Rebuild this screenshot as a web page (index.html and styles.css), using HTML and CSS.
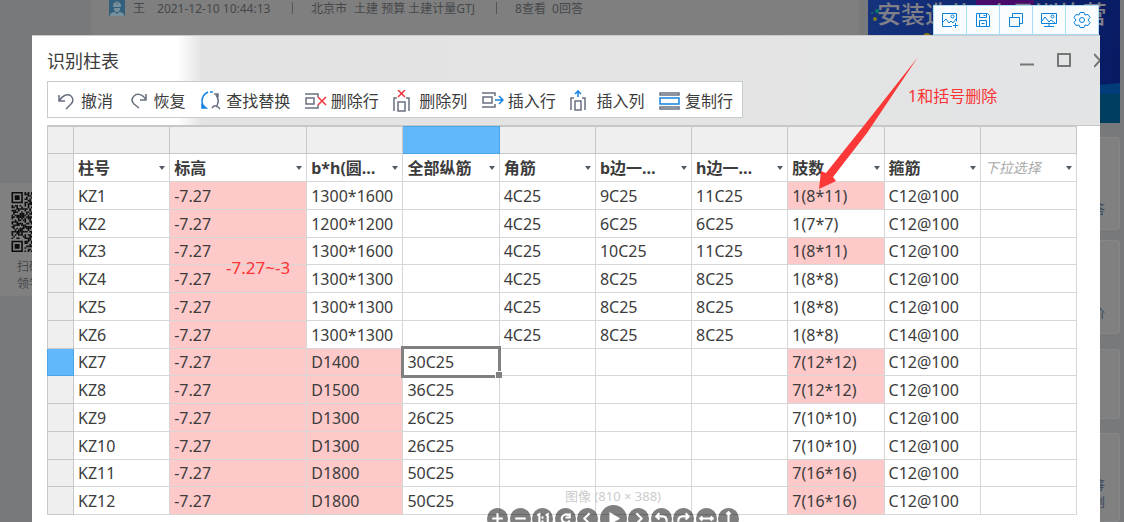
FILE: index.html
```html
<!DOCTYPE html>
<html lang="zh-CN">
<head>
<meta charset="utf-8">
<title>识别柱表</title>
<link rel="stylesheet" href="styles.css">
</head>
<body>
<div class="page">
  <aside class="rail">
    <div class="qr-card">
      <svg class="qr" viewBox="0 0 37 37" aria-hidden="true">
        <g class="qr-dots">
          <path d="M.5 8V29" stroke-dasharray="2 1 1 2 3 1"/>
          <path d="M1.5 9V29" stroke-dasharray="1 1 3 1 1 2"/>
          <path d="M2.5 8V29" stroke-dasharray="1 2 2 1"/>
          <path d="M3.5 8V29" stroke-dasharray="3 1 1 1 2 2"/>
          <path d="M4.5 10V29" stroke-dasharray="2 2 4 1"/>
          <path d="M5.5 8V28" stroke-dasharray="1 1 1 2 3 1"/>
          <path d="M6.5 9V29" stroke-dasharray="2 1 5 2"/>
          <path d="M7.5 10V28" stroke-dasharray="1 2 3 1"/>
          <path d="M8.5 0V37" stroke-dasharray="2 2 1 1 3 1"/>
          <path d="M9.5 1V37" stroke-dasharray="1 1 2 1 1 3"/>
          <path d="M10.5 0V37" stroke-dasharray="3 2 1 1"/>
          <path d="M11.5 2V37" stroke-dasharray="1 1 4 2 2 1"/>
          <path d="M12.5 0V37" stroke-dasharray="2 1 1 2"/>
          <path d="M13.5 0V37" stroke-dasharray="1 2 3 1"/>
          <path d="M.5 .5h6v6h-6zM.5 30.5h6v6h-6z"/>
        </g>
        <path d="M2 2h3v3H2zM2 32h3v3H2z"/>
      </svg>
      <p>扫码下载<br>领学习包</p>
    </div>
  </aside>
  <main class="article">
    <div class="meta">
      <svg class="avatar" viewBox="0 0 16 16" aria-hidden="true"><rect width="16" height="16" rx="1" fill="#315f7c"/><path d="M4 6a4 4 0 0 1 8 0v1H4zM5 8h6c0 3-1 4-3 4S5 11 5 8zM1 16c0-3 2-4 5-4l2 2 2-2c3 0 5 1 5 4z" fill="#78909c"/><path d="M7 1h2v4H7z" fill="#5e7f90"/></svg>
      <span class="author">王</span>
      <time>2021-12-10 10:44:13</time>
      <i class="bar"></i>
      <span class="tags"><span>北京市</span><span>土建 预算 土建计量GTJ</span></span>
      <i class="bar"></i>
      <span>8查看&nbsp; 0回答</span>
    </div>
  </main>
  <aside class="side">
    <div class="banner">
      <svg class="spots" viewBox="0 0 252 123" preserveAspectRatio="none" aria-hidden="true"><path d="M0 82Q170 92 252 83V123H0z" fill="#003d79"/><path d="M0 94H252V123H0z" fill="#003e5f"/><circle cx="9" cy="11" r="2" fill="#087a63"/><circle cx="4" cy="13" r="1" fill="#087a63"/><circle cx="7" cy="19" r="2" fill="#7c7f18"/><path d="M54 36q5-6 10 0z" fill="#8b7b08"/><rect x="108" y="-3" width="58" height="22" rx="3" fill="#480b69"/></svg>
      <strong>安装造价3个月训练营</strong>
    </div>
    <div class="card card-a">答</div>
    <div class="card card-b">价</div>
    <div class="card card-c"></div>
    <div class="card card-d">筹<br>则</div>
  </aside>
</div>

<div class="viewer">
  <section class="window">
    <header class="window-head">
      <div class="titlebar">
        <h1>识别柱表</h1>
        <div class="controls">
          <button aria-label="最小化"><svg width="14" height="16" viewBox="0 0 14 16"><path d="M0 12.5h14"/></svg></button>
          <button aria-label="最大化"><svg width="14" height="16" viewBox="0 0 14 16"><path d="M1 2h12v12H1z"/></svg></button>
          <button class="close" aria-label="关闭"><svg width="14" height="16" viewBox="0 0 14 16"><path d="M0 2l12 13M12 2L0 15"/></svg></button>
        </div>
      </div>
      <nav class="tools">
        <button><svg viewBox="0 0 22 22"><path d="M4 5v6h6M4 11C7 6 12 3 16 6c3 3 2 6 0 8l-5 5"/></svg>撤消</button>
        <button><svg viewBox="0 0 22 22"><path d="M18 4v6h-6M18 10C15 4 9 3 6 6c-3 3-2 6 0 8l5 4"/></svg>恢复</button>
        <button><svg viewBox="0 0 22 22"><g class="blue"><path d="M8 2C4 4 2 7 2 11c0 3 1 5 3 6M10 2h3"/><path d="M2 15v3h4z" fill="#1683e0"/></g><path d="M14 4h4v3M16 5c3 4 3 8 0 12M12 18c2-3 5-3 8 1"/></svg>查找替换</button>
        <button><svg viewBox="0 0 22 22"><path d="M0 4h13v3M0 18h13v-3M1 8h8v6H1z"/><path class="red" d="M13 7l8 8M21 7l-8 8"/></svg>删除行</button>
        <button><svg viewBox="0 0 22 22"><path d="M1 21V8h3M16 21V8h-3M5 12h7v9H5z"/><path class="red" d="M5 0l7 7M12 0L5 7"/></svg>删除列</button>
        <button><svg viewBox="0 0 22 22"><path d="M0 3h13v3M0 17h13v-3M1 7h9v6H1z"/><path class="blue" d="M13 10h7M17 6l4 4-4 4"/></svg>插入行</button>
        <button><svg viewBox="0 0 22 22"><path d="M1 20V8h3M15 20V8h-3M5 11h6v9H5z"/><path class="blue" d="M8 7V1M5 4l3-3 3 3"/></svg>插入列</button>
        <button><svg viewBox="0 0 22 22"><path d="M1 3h19v2H1zM1 17h19v2H1z"/><path class="blue" d="M1 8h19v6H1z"/></svg>复制行</button>
      </nav>
    </header>
    <div class="sheet">
      <table>
        <colgroup><col class="c-num"><col><col class="c-level"><col><col><col><col><col><col><col><col></colgroup>
        <thead>
          <tr class="letters"><td></td><td></td><td></td><td></td><td class="sel"></td><td></td><td></td><td></td><td></td><td></td><td></td></tr>
          <tr>
            <td></td>
            <th><div><span>柱号</span><button aria-label="柱号选项"></button></div></th>
            <th><div><span>标高</span><button aria-label="标高选项"></button></div></th>
            <th><div><span>b*h(圆…</span><button aria-label="截面选项"></button></div></th>
            <th><div><span>全部纵筋</span><button aria-label="全部纵筋选项"></button></div></th>
            <th><div><span>角筋</span><button aria-label="角筋选项"></button></div></th>
            <th><div><span>b边一…</span><button aria-label="b边选项"></button></div></th>
            <th><div><span>h边一…</span><button aria-label="h边选项"></button></div></th>
            <th><div><span>肢数</span><button aria-label="肢数选项"></button></div></th>
            <th><div><span>箍筋</span><button aria-label="箍筋选项"></button></div></th>
            <th class="hint"><div><span>下拉选择</span><button aria-label="下拉选择"></button></div></th>
          </tr>
        </thead>
        <tbody>
          <tr><td></td><td>KZ1</td><td class="bad">-7.27</td><td>1300*1600</td><td></td><td>4C25</td><td>9C25</td><td>11C25</td><td class="bad">1(8*11)</td><td>C12@100</td><td></td></tr>
          <tr><td></td><td>KZ2</td><td class="bad">-7.27</td><td>1200*1200</td><td></td><td>4C25</td><td>6C25</td><td>6C25</td><td>1(7*7)</td><td>C12@100</td><td></td></tr>
          <tr><td></td><td>KZ3</td><td class="bad">-7.27</td><td>1300*1600</td><td></td><td>4C25</td><td>10C25</td><td>11C25</td><td class="bad">1(8*11)</td><td>C12@100</td><td></td></tr>
          <tr><td></td><td>KZ4</td><td class="bad">-7.27</td><td>1300*1300</td><td></td><td>4C25</td><td>8C25</td><td>8C25</td><td>1(8*8)</td><td>C12@100</td><td></td></tr>
          <tr><td></td><td>KZ5</td><td class="bad">-7.27</td><td>1300*1300</td><td></td><td>4C25</td><td>8C25</td><td>8C25</td><td>1(8*8)</td><td>C12@100</td><td></td></tr>
          <tr><td></td><td>KZ6</td><td class="bad">-7.27</td><td>1300*1300</td><td></td><td>4C25</td><td>8C25</td><td>8C25</td><td>1(8*8)</td><td>C14@100</td><td></td></tr>
          <tr><td class="sel"></td><td>KZ7</td><td class="bad">-7.27</td><td class="bad">D1400</td><td class="active">30C25</td><td></td><td></td><td></td><td class="bad">7(12*12)</td><td>C12@100</td><td></td></tr>
          <tr><td></td><td>KZ8</td><td class="bad">-7.27</td><td class="bad">D1500</td><td>36C25</td><td></td><td></td><td></td><td class="bad">7(12*12)</td><td>C12@100</td><td></td></tr>
          <tr><td></td><td>KZ9</td><td class="bad">-7.27</td><td class="bad">D1300</td><td>26C25</td><td></td><td></td><td></td><td>7(10*10)</td><td>C12@100</td><td></td></tr>
          <tr><td></td><td>KZ10</td><td class="bad">-7.27</td><td class="bad">D1300</td><td>26C25</td><td></td><td></td><td></td><td>7(10*10)</td><td>C12@100</td><td></td></tr>
          <tr><td></td><td>KZ11</td><td class="bad">-7.27</td><td class="bad">D1800</td><td>50C25</td><td></td><td></td><td></td><td class="bad">7(16*16)</td><td>C12@100</td><td></td></tr>
          <tr><td></td><td>KZ12</td><td class="bad">-7.27</td><td class="bad">D1800</td><td>50C25</td><td></td><td></td><td></td><td class="bad">7(16*16)</td><td>C12@100</td><td></td></tr>
        </tbody>
      </table>
    </div>
    <span class="note note-level">-7.27~-3</span>
    <span class="note note-legs">1和括号删除</span>
    <svg class="arrow" width="100" height="134" viewBox="0 0 100 134" aria-hidden="true"><path d="M99 0L48 76 14 120 17 124 0 132 2 114 7 116 43 71z"/></svg>
  </section>

  <div class="actions">
    <button aria-label="添加图片"><svg viewBox="0 0 18 16"><path d="M11 14.5H1.500V1.500h14v8M2 10l3-3 3 4 2-2 2 2 3-4M14.500 11v5M12 13.500h5"/><circle cx="11.500" cy="4.500" r="1.500"/></svg></button>
    <button aria-label="保存"><svg viewBox="0 0 18 16"><path d="M2.500 1.500h11l2 2v11h-13zM5.500 1.500v4h7v-4M9.500 3.500h2M5.500 14.500v-6h7v6M7.500 11.500h3"/></svg></button>
    <button aria-label="复制"><svg viewBox="0 0 18 16"><path d="M2.500 5.500h10v9h-10zM5.500 5V1.500h10v10H13"/></svg></button>
    <button aria-label="投屏"><svg viewBox="0 0 18 16"><path d="M1.500 1.500h15v10h-15zM2 9l3-4 4 5 2-2 4 3M9 12v2M4 14.500h10"/><circle cx="12.500" cy="4.500" r="1.500"/></svg></button>
    <button aria-label="设置"><svg viewBox="0 0 18 16"><path d="M7 .5h4l1 2.500 3-.5 2 3-2 2.500 2 2.500-2 3-3-.5-1 2.500H7l-1-2.500-3 .5-2-3L3 8 1 5.500l2-3 3 .5z"/><circle cx="9" cy="8" r="2.500"/></svg></button>
  </div>

  <footer class="viewer-foot">
    <p>图像 (810 × 388)</p>
    <div class="round">
      <button aria-label="放大"><svg viewBox="0 0 20 20"><path d="M10 5v10M5 10h10"/></svg></button>
      <button aria-label="缩小"><svg viewBox="0 0 20 20"><path d="M5 10h10"/></svg></button>
      <button aria-label="原始大小"><svg viewBox="0 0 20 20"><path d="M5 7l2-1v9M13 7l2-1v9M10 8v2M10 12v2"/></svg></button>
      <button aria-label="重置"><svg viewBox="0 0 20 20"><path d="M14 12a4 4 0 1 1-1-5M14 5v4h-4"/></svg></button>
      <button aria-label="上一张"><svg viewBox="0 0 20 20"><path d="M12 5l-5 5 5 5"/></svg></button>
      <button class="play" aria-label="播放"><svg viewBox="0 0 20 20"><path d="M8 7l5 3-5 3z" fill="#fff"/></svg></button>
      <button aria-label="下一张"><svg viewBox="0 0 20 20"><path d="M8 5l5 5-5 5"/></svg></button>
      <button aria-label="向左旋转"><svg viewBox="0 0 20 20"><path d="M8 5L5 8l3 3M5 8h6q4 0 4 5"/></svg></button>
      <button aria-label="向右旋转"><svg viewBox="0 0 20 20"><path d="M12 5l3 3-3 3M15 8H9q-4 0-4 5"/></svg></button>
      <button aria-label="水平翻转"><svg viewBox="0 0 20 20"><path d="M4 10h12M6 8l-2 2 2 2M14 8l2 2-2 2"/></svg></button>
      <button aria-label="垂直翻转"><svg viewBox="0 0 20 20"><path d="M10 4v12M8 6l2-2 2 2M8 14l2 2 2-2"/></svg></button>
    </div>
  </footer>
</div>
</body>
</html>
```
FILE: styles.css
```css
* { box-sizing: border-box; }
body {
  margin: 0;
  height: 100vh;
  overflow: hidden;
  display: grid;
  grid-template: 100vh / 100%;
  font-family: "Noto Sans", "Noto Sans CJK SC", sans-serif;
  color: #3c3c3c;
}
button {
  border: 0;
  padding: 0;
  background: none;
  font: inherit;
  color: inherit;
}
svg { fill: none; display: block; }

/* dimmed article page */
.page {
  grid-area: 1 / 1;
  display: flex;
  background: #77797b;
  color: #45484b;
  font-size: 12px;
  overflow: hidden;
}
.rail { width: 91px; padding-top: 183px; }
.qr-card {
  width: 84px;
  height: 113px;
  padding: 9px 0 0 11px;
  background: #808080;
  border-radius: 3px;
}
.qr { width: 61px; height: 60px; fill: #0c0c0c; }
.qr-dots { fill: none; stroke: #0c0c0c; }
.qr-card p { margin: 6px 0 0 6px; line-height: 17px; }
.article { flex: 1; background: #7f7f7f; }
.meta {
  display: flex;
  align-items: center;
  height: 16px;
  padding-left: 18px;
}
.meta time { min-width: 117px; }
.avatar { width: 16px; height: 16px; }
.author { margin: 0 12px 0 8px; }
.bar { width: 1px; height: 12px; margin: 0 18px; background: #55585b; }
.tags { display: flex; gap: 7px; min-width: 167px; }
.side { width: 265px; padding: 0 4px 0 9px; }
.banner {
  display: grid;
  height: 123px;
  background: linear-gradient(100deg, #16327d, #071a62);
  overflow: hidden;
}
.spots, .banner strong { grid-area: 1 / 1; }
.spots { width: 100%; height: 123px; }
.banner strong {
  padding-left: 9px;
  font-size: 24px;
  line-height: 28px;
  font-weight: 500;
  color: #7f8088;
  white-space: nowrap;
}
.card {
  margin-bottom: 10px;
  padding-right: 14px;
  background: #808080;
  border: 1px solid #868788;
  border-radius: 3px;
  text-align: right;
  line-height: 17px;
  color: #34475a;
}
.card-a { margin-top: 14px; height: 93px; padding-top: 63px; }
.card-b { height: 94px; padding-top: 64px; }
.card-c { height: 70px; margin: 15px 0 14px; }
.card-d { height: 89px; padding-top: 43px; }

/* viewer laid over the page */
.viewer {
  grid-area: 1 / 1;
  position: relative;
  padding: 35px 24px 0 32px;
}
.window {
  position: relative;
  height: 100%;
  background: #fff;
  overflow: hidden;
}
.window-head {
  padding: 0 0 7px 15px;
  border-top: 1px solid #ccc;
  background: linear-gradient(90deg, #fff 145px, #e3e3e3 170px, #e3e4e5);
}
.titlebar {
  display: flex;
  justify-content: space-between;
  height: 45px;
}
h1 {
  margin: 0;
  padding-top: 12px;
  font-size: 18px;
  line-height: 26px;
  font-weight: 400;
}
.controls {
  display: flex;
  gap: 23px;
  align-items: flex-start;
  padding-top: 16px;
  stroke: #777;
  stroke-width: 2;
}
.close { width: 6px; overflow: hidden; }
.tools {
  display: flex;
  justify-content: space-between;
  align-items: center;
  width: 696px;
  height: 37px;
  padding: 2px 9px 0 7px;
  background: #fff;
  border: 1px solid #c6cbcd;
}
.tools button {
  display: flex;
  align-items: center;
  gap: 4px;
  font-size: 16px;
  line-height: 24px;
  white-space: nowrap;
}
.tools svg {
  width: 22px;
  height: 22px;
  stroke: #687080;
  stroke-width: 1.5;
}
.tools .blue { stroke: #1683e0; }
.tools .red { stroke: #f0343c; }

/* column table */
.sheet {
  margin-left: 15px;
  padding-right: 23px;
  border-top: 1px solid #c6c6c6;
}
table {
  width: 100%;
  height: 389px;
  table-layout: fixed;
  border-collapse: collapse;
  font-size: 16px;
  line-height: 24px;
}
.c-num { width: 26px; }
.c-level { width: 137px; }
td, th {
  padding: 1px 0 0 4px;
  border: 1px solid #d6d6d6;
  text-align: left;
  white-space: nowrap;
}
th { height: 28px; }
td:first-child, .letters td { background: #efefef; border-color: #c8c8c8; }
.letters td { height: 27px; }
.bad { background: #fec9c9; }
.letters .sel, tr .sel:first-child { background: #61b8fb; border-color: #4aa5e8; }
.active { outline: 3px solid #808080; outline-offset: -1px; position: relative; }
.active::after {
  content: "";
  position: absolute;
  right: -3px;
  bottom: -3px;
  width: 6px;
  height: 6px;
  background: #808080;
  border: solid #fff;
  border-width: 1px 0 0 1px;
}
th div {
  display: flex;
  align-items: center;
  justify-content: space-between;
  padding-right: 4px;
}
th button {
  border: 3px solid transparent;
  border-top: 4px solid #555b66;
  border-bottom: 0;
}
.hint { color: #aaa; font-weight: 400; font-style: italic; font-size: 14px; }

/* red annotations */
.note {
  position: absolute;
  font-size: 16px;
  line-height: 24px;
  color: #fa3434;
}
.note-level { left: 194px; top: 221px; font-size: 17px; }
.note-legs { left: 876px; top: 49px; }
.arrow { position: absolute; left: 787px; top: 22px; fill: #fa3838; }

/* floating capture actions */
.actions {
  position: absolute;
  top: 5px;
  right: 25px;
  display: flex;
  gap: 1px;
  padding: 1px;
  background: #a9dcf6;
}
.actions button {
  display: grid;
  place-items: center;
  width: 32px;
  height: 28px;
  background: #f9fdff;
}
.actions svg { width: 18px; height: 16px; stroke: #0a82dc; }

.viewer-foot {
  position: absolute;
  left: 102px;
  right: 0;
  top: 487px;
  display: flex;
  flex-direction: column;
  align-items: center;
}
.viewer-foot p {
  margin: 0;
  font-size: 13px;
  line-height: 18px;
  color: #ccc;
}
.round {
  display: flex;
  justify-content: space-between;
  align-items: center;
  width: 252px;
}
.round button {
  width: 21px;
  height: 21px;
  border-radius: 50%;
  background: rgba(0, 0, 0, .5);
}
.round svg { width: 21px; height: 21px; stroke: #fff; stroke-width: 2; }
.round .play { width: 27px; height: 27px; }
.round .play svg { width: 27px; height: 27px; }
```
